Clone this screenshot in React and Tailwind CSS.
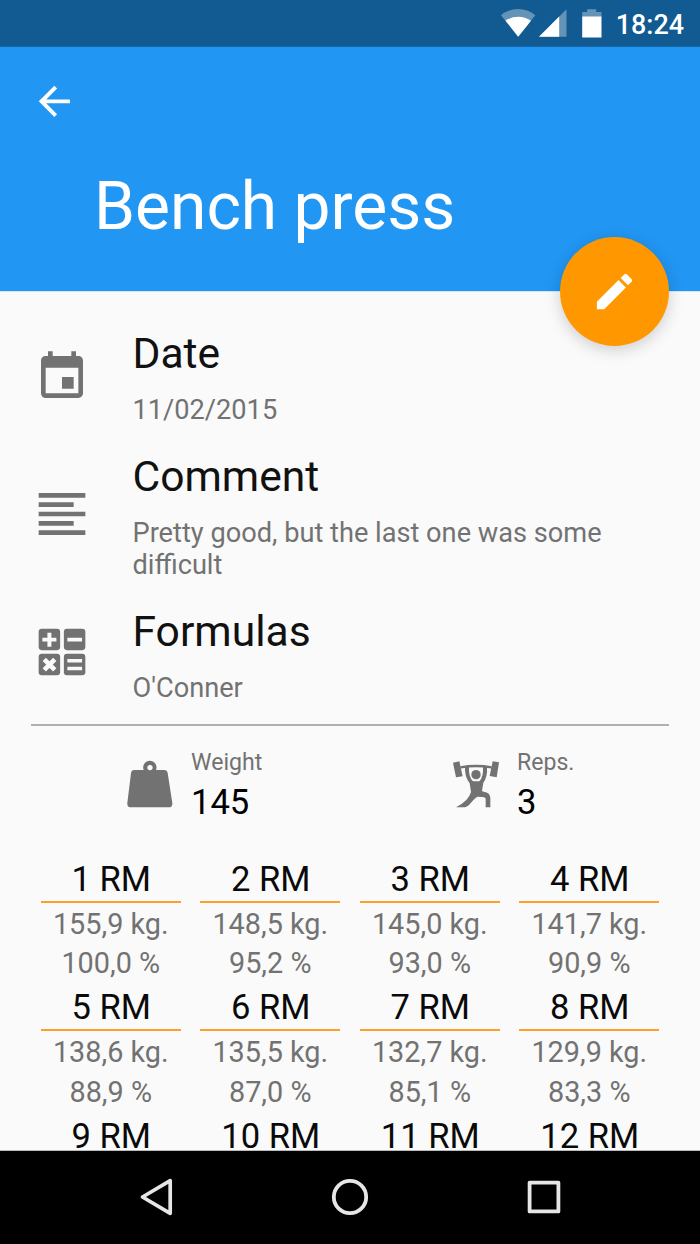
import { MdArrowBack, MdEdit, MdEvent } from "react-icons/md";

const records = [
  { rm: 1, weight: "155,9", percent: "100,0" },
  { rm: 2, weight: "148,5", percent: "95,2" },
  { rm: 3, weight: "145,0", percent: "93,0" },
  { rm: 4, weight: "141,7", percent: "90,9" },
  { rm: 5, weight: "138,6", percent: "88,9" },
  { rm: 6, weight: "135,5", percent: "87,0" },
  { rm: 7, weight: "132,7", percent: "85,1" },
  { rm: 8, weight: "129,9", percent: "83,3" },
  { rm: 9 },
  { rm: 10 },
  { rm: 11 },
  { rm: 12 },
];

function StatusBar() {
  return (
    <div className="flex h-[47px] shrink-0 items-start justify-end border-b border-[#1868a9] bg-[#125a92] pr-[16px] text-white">
      {/* wifi, signal, battery */}
      <svg viewBox="0 0 105 47" className="h-[47px] w-[105px]" fill="currentColor">
        <path d="M1 15.3C11 7 25.5 7 35.3 15.3L18.2 36.7Z" opacity="0.35" />
        <path d="M5.5 20.7C13 15.3 23.4 15.3 31 20.7L18.2 36.7Z" />
        <path d="M66.5 9.2V36.8H39Z" opacity="0.35" />
        <path d="M59.2 16.5V36.8H39Z" />
        <path d="M82.2 12h5V9.2h9V12h5.3v5H82.2z" opacity="0.35" />
        <path d="M82.2 16.5h19.3v21H82.2z" />
      </svg>
      <span className="ml-[11px] mt-[9px] text-[26.9px] leading-[32px] font-medium">18:24</span>
    </div>
  );
}

function CommentIcon() {
  return (
    <svg viewBox="0 0 24 24" className="mb-[4px] size-[56px]" fill="currentColor">
      <path d="M2 3h20v2H2zM2 7h15v2H2zM2 11h20v2H2zM2 15h15v2H2zM2 19h20v2H2z" />
    </svg>
  );
}

function FormulasIcon() {
  return (
    <svg viewBox="0 0 24 24" className="mb-[6px] size-[56px]" fill="none">
      <g fill="currentColor">
        <rect x="2" y="2" width="9.2" height="9.2" rx="1.3" />
        <rect x="12.8" y="2" width="9.2" height="9.2" rx="1.3" />
        <rect x="2" y="12.8" width="9.2" height="9.2" rx="1.3" />
        <rect x="12.8" y="12.8" width="9.2" height="9.2" rx="1.3" />
      </g>
      <g stroke="#fafafa" strokeWidth="1.7">
        <path d="M3.6 6.7h6M6.6 3.7v6M14.3 6.7h6.3" />
        <path d="M4.4 15.2l4.5 4.5M8.9 15.2l-4.5 4.5" strokeWidth="2" />
        <path d="M14.3 15.8h6.3M14.3 19.1h6.3" strokeWidth="1.5" />
      </g>
    </svg>
  );
}

function WeightIcon() {
  return (
    <svg viewBox="35 50 168 168" className="size-[56px]" fill="currentColor">
      <path
        fillRule="evenodd"
        d="M71 92H100A20 20 0 1 1 137 92H162Q170 92 172 101L186 191Q187 204 175 204H62Q50 204 51 191L62 101Q64 92 71 92ZM119 77a8 8 0 1 0 0.01 0Z"
      />
    </svg>
  );
}

function LifterIcon() {
  return (
    <svg viewBox="53 50 168 168" className="size-[56px]" fill="currentColor">
      <path d="M68 70L87 66L97 111L77 114Z" />
      <path d="M187 66L206 69L199 114L178 110Z" />
      <path d="M90 84Q137 76 184 84" fill="none" stroke="currentColor" strokeWidth="7" />
      <circle cx="137" cy="106" r="14" />
      <path d="M104 82H116Q114 112 128 126H147Q160 112 158 82H170Q172 112 159 130L155 155L160 157Q180 160 180 176V204H166V180Q166 173 155 173L141 172Q133 176 122 190Q112 204 98 204H77Q96 194 108 182Q118 172 122 158L118 132Q102 110 104 82Z" />
    </svg>
  );
}

function Section({ icon, title, children }) {
  return (
    <section className="flex items-center">
      <div className="w-[98.5px] shrink-0 text-[#727272]">{icon}</div>
      <div>
        <h2 className="text-[42.6px] leading-[50px] text-[#111]">{title}</h2>
        <p className="mt-[16px] w-[500px] text-[27.2px] leading-[32px] text-[#727272]">{children}</p>
      </div>
    </section>
  );
}

function Stat({ icon, label, value }) {
  return (
    <div className="flex h-[75px] w-[326px] shrink-0 items-start">
      <div className="mt-[7px] w-[69px] shrink-0 text-[#727272]">{icon}</div>
      <div>
        <p className="text-[23.1px] leading-[28px] text-[#727272]">{label}</p>
        <p className="mt-[5px] text-[34.6px] leading-[41px] text-black">{value}</p>
      </div>
    </div>
  );
}

function NavBar() {
  return (
    <nav className="grid h-[94px] shrink-0 grid-cols-3 items-center justify-items-center border-t border-[#bbb] bg-black px-[58.3px] pb-px text-[#e6e6e6]">
      <svg viewBox="0 0 56 56" className="size-[56px]" fill="none" stroke="currentColor" strokeWidth="3.7">
        <path d="M14.5 28L42.2 11.7V44.3Z" strokeLinejoin="round" />
      </svg>
      <svg viewBox="0 0 56 56" className="size-[56px]" fill="none" stroke="currentColor" strokeWidth="3.8">
        <circle cx="28" cy="28" r="16.2" />
      </svg>
      <svg viewBox="0 0 56 56" className="size-[56px]" fill="none" stroke="currentColor" strokeWidth="3.8">
        <rect x="13.6" y="13.6" width="28.8" height="28.8" strokeLinejoin="round" />
      </svg>
    </nav>
  );
}

export default function App() {
  return (
    <div className="relative flex h-[1244px] w-[700px] flex-col overflow-hidden bg-[#fafafa] font-[Roboto,sans-serif]">
      <StatusBar />
      <header className="h-[245px] shrink-0 border-b border-[#d5e9fb] bg-[#2196f3] pt-[31px] text-white">
        <button className="ml-[31px] block">
          <MdArrowBack className="size-[46.67px]" />
        </button>
        <h1 className="mt-[43px] ml-[94px] text-[65.9px] leading-[78px]">Bench press</h1>
      </header>

      <button className="absolute top-[237px] left-[560px] flex size-[109px] items-center justify-center rounded-full bg-[#ff9800] text-white shadow-[0_4px_16px_rgba(0,0,0,0.18)]">
        <MdEdit className="size-[47px]" />
      </button>

      <main className="min-h-0 flex-1 overflow-hidden px-[31px] pt-[36px]">
        <div className="flex flex-col gap-[25px] pl-[3px]">
          <Section icon={<MdEvent className="size-[56px]" />} title="Date">
            11/02/2015
          </Section>
          <Section icon={<CommentIcon />} title="Comment">
            Pretty good, but the last one was some difficult
          </Section>
          <Section icon={<FormulasIcon />} title="Formulas">
            O'Conner
          </Section>
        </div>

        <hr className="mt-[20px] border-t-2 border-[#b0b0b0]" />

        <div className="mt-[23px] flex pl-[91px]">
          <Stat icon={<WeightIcon />} label="Weight" value="145" />
          <Stat icon={<LifterIcon />} label="Reps." value="3" />
        </div>

        {/* Estimated maxes */}
        <div className="mt-[35px] grid grid-cols-4 text-center">
          {records.map((record) => (
            <div key={record.rm} className="mx-[9.7px] h-[128.3px]">
              <h3 className="border-b-2 border-[#ff9f2a] pb-[2px] pl-px text-[34.6px] leading-[40px] text-[#0a0a0a]">
                {record.rm} RM
              </h3>
              {record.weight && (
                <p className="mt-[2px] text-[28.8px] leading-[39.3px] text-[#727272]">
                  {record.weight} kg.
                  <br />
                  {record.percent} %
                </p>
              )}
            </div>
          ))}
        </div>
      </main>

      <NavBar />
    </div>
  );
}
